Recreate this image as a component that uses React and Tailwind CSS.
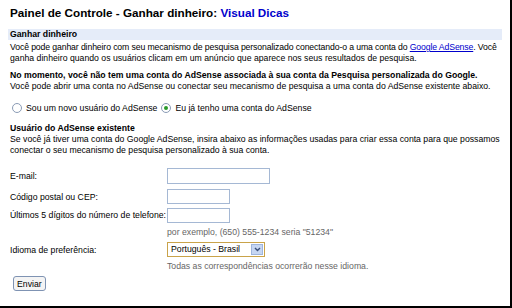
import React from "react";

export default function App() {
  return (
    <div className="w-[512px] h-[308px] bg-white overflow-hidden text-[#000]" style={{ fontFamily: '"Liberation Sans", Arial, sans-serif' }}>
      <div className="w-[510px] h-[306px] border-r-2 border-b-2 border-black box-content">
        <div className="pt-[6px] pl-[10px] text-[11.7px] font-bold leading-[14px]">
          Painel de Controle - Ganhar dinheiro: <span className="text-[#0000cc]">Visual Dicas</span>
        </div>
        <div className="pl-[8px] pr-[8px] mt-[9px]">
          <div className="bg-[#e5ecf9] h-[11px] pl-[2px] text-[8.7px] font-bold leading-[11px]">Ganhar dinheiro</div>
          <div className="pl-[2px] pt-[2px] text-[8.7px] leading-[11px] -mr-[6px]">
            <p>
              <span className="whitespace-nowrap tracking-[-0.12px]">Você pode ganhar dinheiro com seu mecanismo de pesquisa personalizado conectando-o a uma conta do <a className="text-[#0000cc] underline">Google AdSense</a>. Você</span>
              <br />
              ganha dinheiro quando os usuários clicam em um anúncio que aparece nos seus resultados de pesquisa.
            </p>
            <p className="mt-[6px] font-bold">No momento, você não tem uma conta do AdSense associada à sua conta da Pesquisa personalizada do Google.</p>
            <p>Você pode abrir uma conta no AdSense ou conectar seu mecanismo de pesquisa a uma conta do AdSense existente abaixo.</p>
            <div className="mt-[9px] flex items-center h-[14px]">
              <span className="ml-[2px] w-[10px] h-[10px] rounded-full border border-[#8a9bb5] bg-white mr-[4px]"></span>
              <span>Sou um novo usuário do AdSense</span>
              <span className="ml-[4px] w-[10px] h-[10px] rounded-full border border-[#8a9bb5] bg-white mr-[4px] flex items-center justify-center">
                <span className="w-[4px] h-[4px] rounded-full bg-[#2a9a2a]"></span>
              </span>
              <span>Eu já tenho uma conta do AdSense</span>
            </div>
            <p className="mt-[8px] font-bold">Usuário do AdSense existente</p>
            <p>Se você já tiver uma conta do Google AdSense, insira abaixo as informações usadas para criar essa conta para que possamos conectar o seu mecanismo de pesquisa personalizado à sua conta.</p>
            <div className="mt-[12px] grid grid-cols-[157px_1fr] gap-y-0">
              <div className="pt-[3px] whitespace-nowrap">E-mail:</div>
              <div className="h-[21px]"><div className="w-[103px] h-[16px] border border-[#a5b8d4] bg-white"></div></div>
              <div className="pt-[3px] whitespace-nowrap">Código postal ou CEP:</div>
              <div className="h-[19px]"><div className="w-[63px] h-[15px] border border-[#a5b8d4] bg-white"></div></div>
              <div className="pt-[2px] whitespace-nowrap">Últimos 5 dígitos do número de telefone:</div>
              <div><div className="w-[63px] h-[15px] border border-[#a5b8d4] bg-white"></div>
                <div className="text-[#666] mt-[4px]">por exemplo, (650) 555-1234 seria "51234"</div>
              </div>
              <div className="pt-[7px] whitespace-nowrap">Idioma de preferência:</div>
              <div className="pt-[4px]">
                <div className="w-[98px] h-[15px] border border-[#c9a34a] bg-white flex items-center">
                  <span className="pl-[3px] flex-1">Português - Brasil</span>
                  <span className="w-[12px] h-[11px] mr-[1px] bg-[#c6d6f2] border border-[#9fb5dc] flex items-center justify-center">
                    <svg width="7" height="5" viewBox="0 0 7 5"><path d="M1 1 L3.5 3.5 L6 1" stroke="#3a4f7a" strokeWidth="1.4" fill="none" /></svg>
                  </span>
                </div>
                <div className="text-[#666] mt-[4px]">Todas as correspondências ocorrerão nesse idioma.</div>
              </div>
            </div>
            <button className="mt-[4px] ml-[3px] h-[15px] px-[3px] border border-[#7f93b3] rounded-[3px] bg-[#f4f4f4] text-[8.7px] leading-[12px]">Enviar</button>
          </div>
        </div>
      </div>
    </div>
  );
}
